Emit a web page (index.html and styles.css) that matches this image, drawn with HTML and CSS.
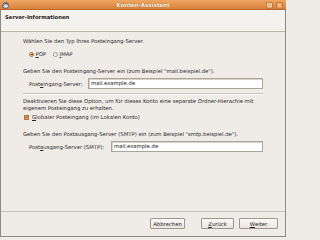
FILE: index.html
```html
<!DOCTYPE html>
<html lang="de">
<head>
<meta charset="utf-8">
<title>Konten-Assistent</title>
<link rel="stylesheet" href="styles.css">
</head>
<body>
<div class="window">
  <div class="titlebar">
    <svg class="app-icon" width="7" height="7" viewBox="0 0 7 7">
      <circle cx="3.5" cy="3.5" r="3.2" fill="#3b5f99"/>
      <path d="M1 4.5 Q3.5 1 6 3 L5.5 5.5 Q3 6.5 1 4.5Z" fill="#e8e4dc"/>
      <circle cx="2.2" cy="2.3" r="1" fill="#f0a030"/>
    </svg>
    <span class="title">Konten-Assistent</span>
    <div class="wm-buttons">
      <span class="wm-btn">
        <svg width="6" height="6" viewBox="0 0 6 6"><rect x="1" y="1.5" width="4" height="3" fill="none" stroke="#fff" stroke-width="0.8"/></svg>
      </span>
      <span class="wm-btn">
        <svg width="6" height="6" viewBox="0 0 6 6"><path d="M1.5 1.5 L4.5 4.5 M4.5 1.5 L1.5 4.5" stroke="#fff" stroke-width="0.9"/></svg>
      </span>
    </div>
  </div>
  <div class="header">Server-Informationen</div>
  <div class="content">
    <p class="line first">Wählen Sie den Typ Ihres Posteingang-Server.</p>
    <div class="radio-row">
      <label class="radio"><span class="dot checked"></span><span><u>P</u>OP</span></label>
      <label class="radio"><span class="dot"></span><span><u>I</u>MAP</span></label>
    </div>
    <p class="line geben">Geben Sie den Posteingang-Server ein (zum Beispiel "mail.beispiel.de").</p>
    <div class="field-row">
      <span class="label in-label">Post<u>e</u>ingang-Server:</span>
      <span class="input">mail.example.de</span>
    </div>
    <div class="sep"></div>
    <p class="line para">Deaktivieren Sie diese Option, um für dieses Konto eine separate Ordner-Hierachie mit eigenem Posteingang zu erhalten.</p>
    <label class="check-row"><span class="box"><svg width="4" height="4" viewBox="0 0 4 4"><path d="M0.5 2 L1.6 3.3 L3.6 0.5" fill="none" stroke="#6b3f10" stroke-width="0.9"/></svg></span><span><u>G</u>lobaler Posteingang (im Lokalen Konto)</span></label>
    <p class="line smtp">Geben Sie den Postausgang-Server (SMTP) ein (zum Beispiel "smtp.beispiel.de").</p>
    <div class="field-row">
      <span class="label out-label">Post<u>a</u>usgang-Server (SMTP):</span>
      <span class="input">mail.example.de</span>
    </div>
  </div>
  <div class="footer">
    <span class="btn cancel">Abbrechen</span>
    <span class="btn back"><u>Z</u>urück</span>
    <span class="btn next"><u>W</u>eiter</span>
  </div>
</div>
</body>
</html>
```

FILE: styles.css
```css
* { box-sizing: border-box; }
html, body { margin: 0; padding: 0; }
body {
  width: 286px;
  height: 238px;
  overflow: hidden;
  background: #efebe7;
  font-family: "DejaVu Sans", "Liberation Sans", sans-serif;
  font-size: 5.3px;
  color: #2a2a2a;
}
.window {
  width: 286px;
  height: 237px;
  display: flex;
  flex-direction: column;
  background: #efebe7;
  border: 1px solid #8d8a84;
  border-top: none;
}
.titlebar {
  height: 10px;
  flex: none;
  display: flex;
  align-items: center;
  justify-content: center;
  position: relative;
  background: linear-gradient(#eea763, #d9813a);
  border-bottom: 1px solid #b8682a;
  margin: 0 -1px;
}
.app-icon { position: absolute; left: 2px; top: 1.5px; }
.title {
  color: #fff6e8;
  font-weight: bold;
  font-size: 5.5px;
  text-shadow: 0 0 1px #7a4310;
}
.wm-buttons {
  position: absolute;
  right: 3px;
  top: 1.5px;
  display: flex;
  gap: 3px;
}
.wm-btn {
  width: 7px;
  height: 7px;
  display: flex;
  align-items: center;
  justify-content: center;
  border: 1px solid #c77a3a;
  background: #e7a062;
  border-radius: 1px;
}
.header {
  flex: none;
  height: 22px;
  padding: 3px 4px 0;
  background: #f4f2ee;
  border-bottom: 1px solid #b9b4ac;
  font-weight: bold;
  font-size: 5.3px;
  color: #1e1e1e;
  line-height: 8px;
}
.content {
  flex: 1;
  padding: 0 22px 0 22px;
}
.line { margin: 0; line-height: 7px; }
.first { margin-top: 6px; }
.radio-row {
  display: flex;
  gap: 7px;
  margin: 5px 0 0 6px;
  height: 8px;
  align-items: center;
}
.radio { display: flex; align-items: center; gap: 1.5px; }
.dot {
  width: 5px;
  height: 5px;
  border-radius: 50%;
  border: 1px solid #9a958d;
  background: #fbfaf8;
  position: relative;
}
.dot.checked { background: #e9b98b; border-color: #b47a45; }
.dot.checked::after {
  content: "";
  position: absolute;
  left: 1px; top: 1px;
  width: 1.5px; height: 1.5px;
  border-radius: 50%;
  background: #5a3010;
}
.geben { margin-top: 10px; }
.field-row {
  display: flex;
  align-items: center;
  margin: 3px 0 0 6px;
}
.label { white-space: nowrap; flex: none; }
.in-label { width: 59px; }
.out-label { width: 82px; }
.input {
  flex: 1;
  height: 11px;
  border: 1px solid #a9a49c;
  background: #fff;
  padding-left: 2px;
  line-height: 9px;
  color: #111;
  box-shadow: inset 1px 1px 0 #d6d2cb;
}
.sep {
  height: 1px;
  background: #c9c4bb;
  border-bottom: 1px solid #fbfaf8;
  box-sizing: content-box;
  margin: 4px 0 3px;
}
.para { line-height: 7px; }
.check-row {
  display: flex;
  align-items: center;
  gap: 3px;
  margin: 1px 0 0 1px;
  height: 8px;
}
.box {
  width: 5px; height: 5px;
  border: 1px solid #b0753c;
  background: #eaa467;
  display: flex;
  align-items: center;
  justify-content: center;
}
.smtp { margin-top: 10px; }
.footer {
  flex: none;
  height: 25px;
  border-top: 1px solid #c9c4bb;
  display: flex;
  justify-content: flex-end;
  align-items: flex-start;
  padding: 6px 7px 0 0;
  gap: 5px;
}
.btn {
  height: 11px;
  display: flex;
  align-items: center;
  justify-content: center;
  border: 1px solid #9c978f;
  border-radius: 1px;
  background: linear-gradient(#fbfaf8, #e9e5df);
  color: #222;
}
.cancel { width: 35px; margin-right: 11px; }
.back { width: 33px; }
.next { width: 39px; }
```
